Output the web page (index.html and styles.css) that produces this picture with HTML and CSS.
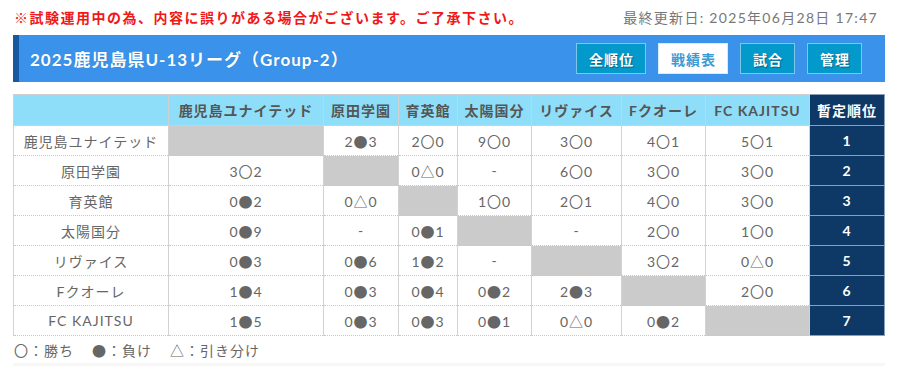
FILE: index.html
```html
<!DOCTYPE html>
<html lang="ja">
<head>
<meta charset="utf-8">
<title>戦績表</title>
<link rel="stylesheet" href="styles.css">
</head>
<body>
<div class="wrap">
  <div class="topline">
    <span class="notice">※試験運用中の為、内容に誤りがある場合がございます。ご了承下さい。</span>
    <span class="updated">最終更新日: 2025年06月28日 17:47</span>
  </div>
  <div class="header">
    <h1 class="title">2025鹿児島県U-13リーグ（Group-2）</h1>
    <nav class="nav">
      <a class="btn">全順位</a>
      <a class="btn active">戦績表</a>
      <a class="btn">試合</a>
      <a class="btn">管理</a>
    </nav>
  </div>
  <table class="grid">
    <colgroup>
      <col class="w-name"><col class="w1"><col class="w2"><col class="w3"><col class="w4"><col class="w5"><col class="w6"><col class="w7"><col class="w-rank">
    </colgroup>
    <thead>
      <tr>
        <th></th><th>鹿児島ユナイテッド</th><th>原田学園</th><th>育英館</th><th>太陽国分</th><th>リヴァイス</th><th>Fクオーレ</th><th>FC KAJITSU</th><th class="rank">暫定順位</th>
      </tr>
    </thead>
    <tbody>
      <tr><td class="name">鹿児島ユナイテッド</td><td class="self"></td><td>2<span class="m">●</span>3</td><td>2<span class="m">〇</span>0</td><td>9<span class="m">〇</span>0</td><td>3<span class="m">〇</span>0</td><td>4<span class="m">〇</span>1</td><td>5<span class="m">〇</span>1</td><td class="rank">1</td></tr>
      <tr><td class="name">原田学園</td><td>3<span class="m">〇</span>2</td><td class="self"></td><td>0<span class="m">△</span>0</td><td>-</td><td>6<span class="m">〇</span>0</td><td>3<span class="m">〇</span>0</td><td>3<span class="m">〇</span>0</td><td class="rank">2</td></tr>
      <tr><td class="name">育英館</td><td>0<span class="m">●</span>2</td><td>0<span class="m">△</span>0</td><td class="self"></td><td>1<span class="m">〇</span>0</td><td>2<span class="m">〇</span>1</td><td>4<span class="m">〇</span>0</td><td>3<span class="m">〇</span>0</td><td class="rank">3</td></tr>
      <tr><td class="name">太陽国分</td><td>0<span class="m">●</span>9</td><td>-</td><td>0<span class="m">●</span>1</td><td class="self"></td><td>-</td><td>2<span class="m">〇</span>0</td><td>1<span class="m">〇</span>0</td><td class="rank">4</td></tr>
      <tr><td class="name">リヴァイス</td><td>0<span class="m">●</span>3</td><td>0<span class="m">●</span>6</td><td>1<span class="m">●</span>2</td><td>-</td><td class="self"></td><td>3<span class="m">〇</span>2</td><td>0<span class="m">△</span>0</td><td class="rank">5</td></tr>
      <tr><td class="name">Fクオーレ</td><td>1<span class="m">●</span>4</td><td>0<span class="m">●</span>3</td><td>0<span class="m">●</span>4</td><td>0<span class="m">●</span>2</td><td>2<span class="m">●</span>3</td><td class="self"></td><td>2<span class="m">〇</span>0</td><td class="rank">6</td></tr>
      <tr><td class="name">FC KAJITSU</td><td>1<span class="m">●</span>5</td><td>0<span class="m">●</span>3</td><td>0<span class="m">●</span>3</td><td>0<span class="m">●</span>1</td><td>0<span class="m">△</span>0</td><td>0<span class="m">●</span>2</td><td class="self"></td><td class="rank">7</td></tr>
    </tbody>
  </table>
  <p class="legend"><span><span class="m">〇</span>：勝ち</span><span><span class="m">●</span>：負け</span><span><span class="m">△</span>：引き分け</span></p>
  <div class="footer-box"></div>
</div>
</body>
</html>
```
FILE: styles.css
```css
* { box-sizing: border-box; }
html, body { margin: 0; padding: 0; background: #fff; }
body {
  font-family: "Lato", "Noto Sans CJK JP", sans-serif;
  font-size: 14px;
  color: #666;
  letter-spacing: 1px;
}
.wrap { padding: 0 14px 0 13px; width: 899px; }
.topline {
  display: flex;
  justify-content: space-between;
  align-items: center;
  padding-top: 8px;
  height: 28px;
  line-height: 20px;
  margin-bottom: 7px;
}
.notice { color: #f01818; font-weight: bold; padding-left: 1px; letter-spacing: 1.5px; }
.updated { color: #777; padding-right: 7px; letter-spacing: 1.3px; }
.header {
  display: flex;
  align-items: center;
  justify-content: space-between;
  height: 47px;
  background: #3a92ea;
  border-left: 6px solid #1559a3;
  padding: 0 23px 0 11px;
}
.title {
  margin: 0;
  color: #fff;
  font-size: 17px;
  font-weight: bold;
  letter-spacing: 1px;
  text-shadow: 0 0 1px rgba(0,0,0,0.2);
}
.nav { display: flex; gap: 12px; }
.btn {
  display: flex;
  align-items: center;
  justify-content: center;
  height: 31px;
  padding: 0 11px 0 12px;
  border: 1px solid #7cc8ea;
  background: #0399cb;
  color: #fff;
  font-weight: bold;
  font-size: 14px;
  text-shadow: 1px 1px 1px rgba(0,0,0,0.35);
}
.btn.active {
  background: #fff;
  color: #3b9bd4;
  border-color: #d8eaf6;
  text-shadow: none;
}
.grid {
  margin-top: 12px;
  width: 871px;
  border-collapse: collapse;
  table-layout: fixed;
}
.w-name { width: 155px; }
.w1 { width: 155px; }
.w2 { width: 75px; }
.w3 { width: 59px; }
.w4 { width: 74px; }
.w5 { width: 90px; }
.w6 { width: 84px; }
.w7 { width: 104px; }
.w-rank { width: 75px; }
.grid th {
  background: #8fdef9;
  color: #555;
  font-weight: bold;
  height: 31px;
  padding: 0;
  text-align: center;
  white-space: nowrap;
  border: 1px solid #d0d0d0;
}
.grid td {
  height: 30px;
  padding: 0;
  text-align: center;
  white-space: nowrap;
  border-left: 1px solid #d2d2d2;
  border-right: 1px solid #d2d2d2;
  border-top: 1px dotted #c8c8c8;
  border-bottom: 1px dotted #c8c8c8;
  color: #666;
}
.m {
  font-family: "Noto Sans CJK JP", sans-serif;
  letter-spacing: 0;
  margin-right: 1px;
}
.grid td.self { background: #cbcbcb; }
.grid .rank {
  background: #0e3966;
  color: #fff;
  font-weight: bold;
  border: 1px solid #8aa0b8;
}
.legend {
  margin: 4px 0 0 1px;
  line-height: 20px;
  display: flex;
  gap: 18px;
}
.footer-box {
  margin-top: 2px;
  height: 20px;
  background: #f7f7f7;
}
```
